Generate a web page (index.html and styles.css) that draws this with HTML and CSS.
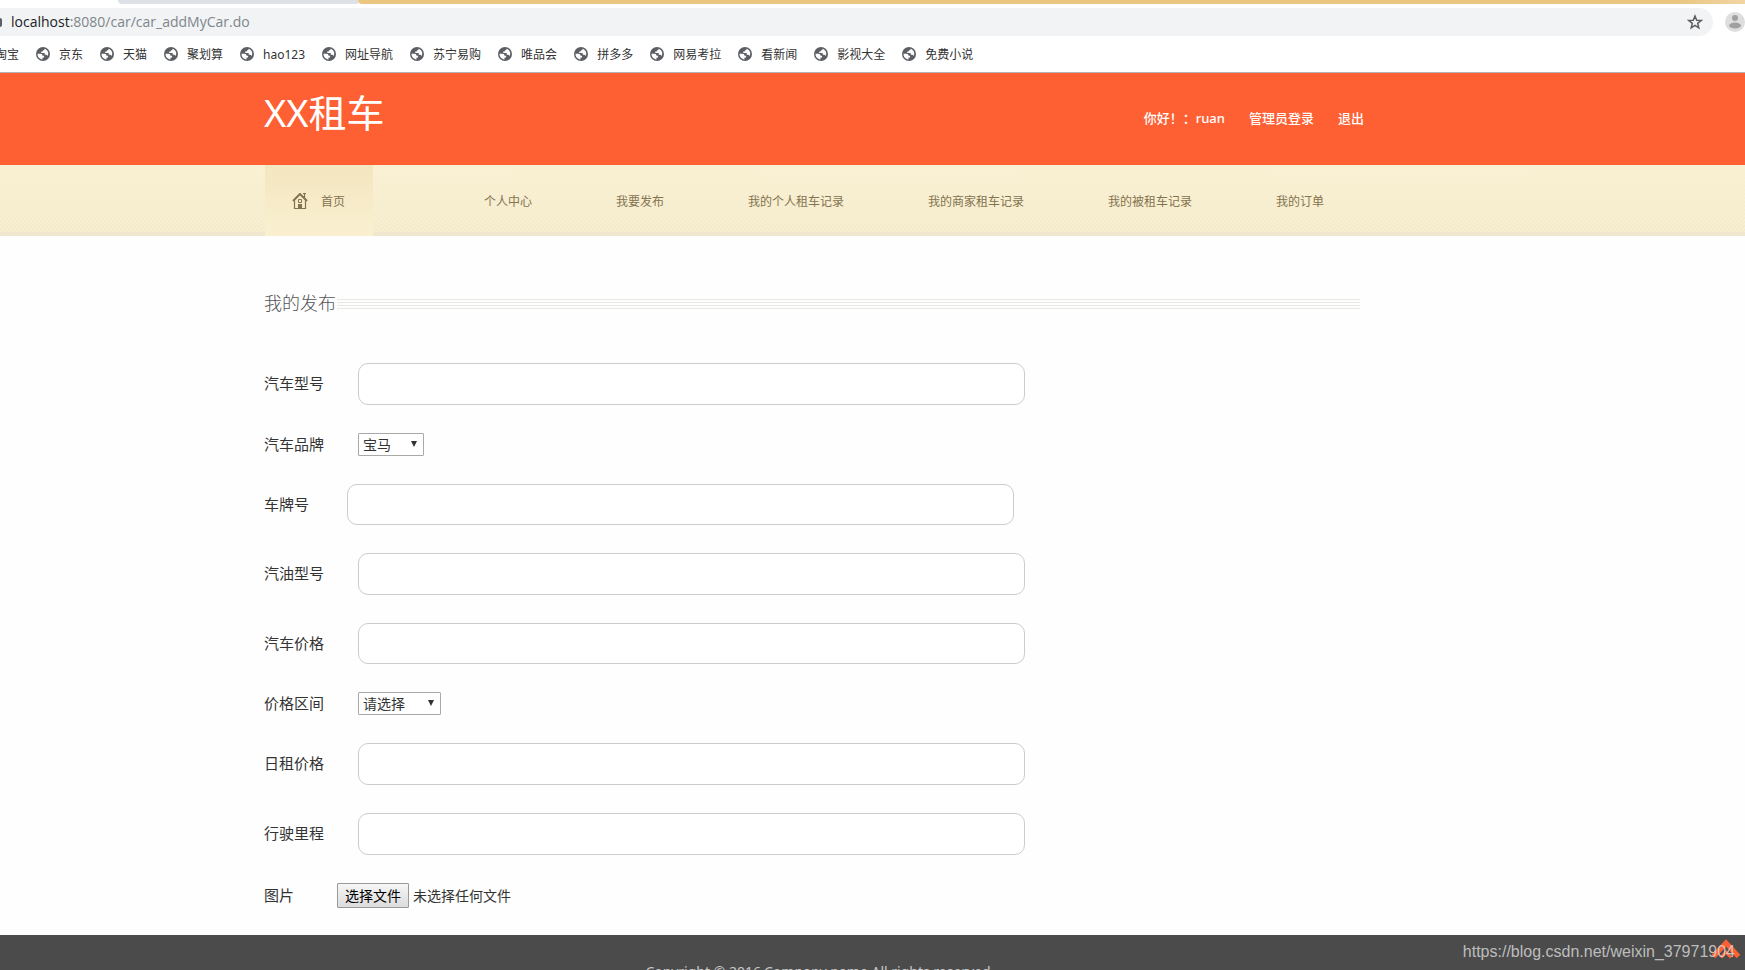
FILE: index.html
```html
<!DOCTYPE html>
<html lang="zh-CN">
<head>
<meta charset="utf-8">
<title>我的发布</title>
<link rel="stylesheet" href="styles.css">
</head>
<body>
<svg class="defs" aria-hidden="true">
  <symbol id="globe" viewBox="0 0 14 14">
    <circle cx="7" cy="7" r="7" fill="#5b5e62"/>
    <path d="M1.500 6.800h2.800c1.600 0 2.200.8 2.200 1.900h1.600v1.800H6.500v1.900C3.500 12.300 1.400 9.800 1.500 6.800z" fill="#fff"/>
    <path d="M8.500 1.700c.2 1.200-.5 1.700-1.700 1.700v1.200H5.200v1.300h3.500v1.900h1.200c.9 0 1.400.6 1.700 1.300 1.600-2.800.3-6.400-3.100-7.400z" fill="#fff"/>
  </symbol>
</svg>
<div class="browser">
  <div class="tabs"><span class="tab"></span><span class="strip"></span></div>
  <div class="toolbar">
    <div class="omnibox">
      <span class="info"></span>
      <span class="url"><b>localhost</b>:8080/car/car_addMyCar.do</span>
      <svg class="star" viewBox="0 0 16 16"><path d="M8 2l1.700 4.200 4.500.3-3.500 2.900 1.100 4.400L8 11.400l-3.800 2.400 1.100-4.400L1.800 6.500l4.500-.3z" fill="none" stroke="#5b5e62" stroke-width="1.500"/></svg>
    </div>
    <svg class="avatar" viewBox="0 0 20 20"><circle cx="10" cy="10" r="10" fill="#dedede"/><circle cx="10" cy="6" r="3" fill="#a0a0a0"/><ellipse cx="10" cy="13.500" rx="6" ry="3" fill="#a0a0a0"/></svg>
  </div>
  <nav class="bookmarks">
    <a href="#"><svg><use href="#globe"/></svg>淘宝</a>
    <a href="#"><svg><use href="#globe"/></svg>京东</a>
    <a href="#"><svg><use href="#globe"/></svg>天猫</a>
    <a href="#"><svg><use href="#globe"/></svg>聚划算</a>
    <a href="#"><svg><use href="#globe"/></svg>hao123</a>
    <a href="#"><svg><use href="#globe"/></svg>网址导航</a>
    <a href="#"><svg><use href="#globe"/></svg>苏宁易购</a>
    <a href="#"><svg><use href="#globe"/></svg>唯品会</a>
    <a href="#"><svg><use href="#globe"/></svg>拼多多</a>
    <a href="#"><svg><use href="#globe"/></svg>网易考拉</a>
    <a href="#"><svg><use href="#globe"/></svg>看新闻</a>
    <a href="#"><svg><use href="#globe"/></svg>影视大全</a>
    <a href="#"><svg><use href="#globe"/></svg>免费小说</a>
  </nav>
</div>
<header class="header">
  <div class="container header-row">
    <h1 class="logo">XX租车</h1>
    <div class="account"><span>你好！：ruan</span><a href="#">管理员登录</a><a href="#">退出</a></div>
  </div>
</header>
<nav class="menu">
  <div class="container menu-row">
    <a class="home" href="#"><svg viewBox="0 0 16 16"><path d="M1 8 8 1l7 7" fill="none" stroke="#83734f" stroke-width="2"/><path d="M12.500 5V0.500M11 .5h3M2.500 7.500v8h11v-8" fill="none" stroke="#83734f" stroke-width="1.200"/><path d="M6 11h4v5H6z" fill="#83734f"/><path d="M6.500 6.500h3v3h-3z" fill="none" stroke="#83734f"/></svg>首页</a>
    <a href="#">个人中心</a>
    <a href="#">我要发布</a>
    <a href="#">我的个人租车记录</a>
    <a href="#">我的商家租车记录</a>
    <a href="#">我的被租车记录</a>
    <a href="#">我的订单</a>
  </div>
</nav>
<main class="container main">
  <h2 class="title">我的发布</h2>
  <form class="form">
    <div class="row"><label for="model">汽车型号</label><input id="model" type="text"></div>
    <div class="row"><label for="brand">汽车品牌</label><select id="brand"><option>宝马</option></select></div>
    <div class="row three"><label for="plate">车牌号</label><input id="plate" class="short" type="text"></div>
    <div class="row"><label for="fuel">汽油型号</label><input id="fuel" type="text"></div>
    <div class="row"><label for="price">汽车价格</label><input id="price" class="short" type="text"></div>
    <div class="row"><label for="range">价格区间</label><select id="range" class="wide"><option>请选择</option></select></div>
    <div class="row"><label for="daily">日租价格</label><input id="daily" type="text"></div>
    <div class="row"><label for="mileage">行驶里程</label><input id="mileage" type="text"></div>
    <div class="row two"><label for="photo">图片</label><input id="photo" type="file" hidden><button type="button">选择文件</button><span class="file-name">未选择任何文件</span></div>
  </form>
</main>
<footer class="footer">
  <p class="container">Copyright © 2016.Company name All rights reserved.</p>
</footer>
<a class="to-top" href="#" aria-label="返回顶部"><svg viewBox="0 0 30 24"><path d="M2.500 18.500 15 5l12.500 13.500" fill="none" stroke="#fe5f33" stroke-width="5"/><path d="M10 19.500 15 14l5 5.500" fill="none" stroke="#fe5f33" stroke-width="3"/></svg></a>
<span class="watermark">https://blog.csdn.net/weixin_37971904</span>
</body>
</html>
```
FILE: styles.css
```css
* { box-sizing: border-box; }
body {
  margin: 0;
  height: 100vh;
  overflow: hidden;
  position: relative;
  display: flex;
  flex-direction: column;
  background: #fefefe;
  color: #333;
  font-family: "Noto Sans", "Noto Sans CJK SC", sans-serif;
}
a { color: inherit; text-decoration: none; }
.defs { display: none; }
.browser { background: #fff; border-bottom: 1px solid #b4b4b8; }
.tabs { display: flex; height: 4px; padding-left: 118px; }
.tab { width: 240px; background: #dee1e6; border-bottom-left-radius: 4px; }
.strip { flex: 1; background: linear-gradient(90deg, #ebc680 95%, #f1d5a4); border-bottom-left-radius: 4px; }
.toolbar { display: flex; align-items: center; gap: 12px; height: 36px; }
.omnibox {
  flex: 1;
  display: flex;
  align-items: center;
  height: 28px;
  padding-right: 10px;
  background: #f1f3f4;
  border-radius: 0 14px 14px 0;
}
.info { width: 2px; height: 9px; margin-right: 9px; background: #5b5e62; border-radius: 0 2px 2px 0; }
.url { flex: 1; font-size: 14px; line-height: 20px; color: #80868b; font-family: "Open Sans", sans-serif; }
.url b { font-weight: 400; color: #202124; }
.star { width: 16px; height: 16px; }
.avatar { width: 20px; height: 20px; }
.bookmarks {
  display: flex;
  gap: 17px;
  height: 32px;
  padding-bottom: 4px;
  margin-left: -28px;
  align-items: center;
  font-size: 12px;
  white-space: nowrap;
}
.bookmarks a { display: flex; align-items: center; gap: 9px; }
.bookmarks svg { width: 14px; height: 14px; }
.container { width: 100%; max-width: 1364px; padding-left: 264px; }
.header { background: #fe5f33; color: #fff; }
.header-row { display: flex; justify-content: space-between; align-items: center; height: 92px; }
.logo { margin: 0 0 14px; font-size: 38px; line-height: 48px; font-weight: 400; }
.account { display: flex; gap: 24px; margin-bottom: 2px; font-size: 13px; line-height: 20px; font-weight: 500; }
.menu {
  background:
    linear-gradient(#faf0d3, rgba(250, 240, 211, 0)),
    linear-gradient(135deg, #f2e8ca 25%, transparent 25% 50%, #f2e8ca 50% 75%, transparent 75%) 0 0 / 4px 4px,
    #f9f0d2;
  box-shadow: inset 0 -4px #f1e7cf;
  color: #83734f;
  font-size: 12px;
}
.menu-row { display: flex; height: 71px; }
.menu-row a { display: flex; flex: none; align-items: center; padding: 0 42px; white-space: nowrap; }
.menu-row .home {
  width: 108px;
  margin: 0 69px 0 1px;
  padding: 0 0 0 27px;
  gap: 13px;
  background: linear-gradient(#f3e6c0, #faf0d0);
}
.home svg { width: 16px; height: 16px; }
.main { padding-top: 53px; }
.title {
  display: flex;
  align-items: center;
  margin: 0 4px 46px 0;
  font-size: 18px;
  line-height: 28px;
  font-weight: 300;
  color: #555;
}
.title::after {
  content: "";
  flex: 1;
  height: 10px;
  margin: 2px 0 0 1px;
  background: repeating-linear-gradient(#e8e8e4 0 1px, transparent 1px 3px);
}
.form { display: flex; flex-direction: column; gap: 28px; }
.row { display: flex; align-items: center; }
.row label { width: 94px; padding-bottom: 2px; font-size: 15px; line-height: 20px; }
.three label { width: 83px; }
.two label { width: 73px; }
.row input { flex: 0 1 667px; height: 42px; padding: 0 12px; border: 1px solid #ccc; border-radius: 10px; background: #fff; font: inherit; }
.row .short { height: 41px; }
.row select {
  appearance: none;
  width: 66px;
  height: 23px;
  padding: 0 4px;
  border: 1px solid #a9a9a9;
  border-radius: 1px;
  background: #fff url("data:image/svg+xml,%3Csvg xmlns='http://www.w3.org/2000/svg' width='6' height='6'%3E%3Cpath d='M0 0h6L3 6z' fill='%23333'/%3E%3C/svg%3E") no-repeat right 6px top 7px;
  color: #333;
  font-family: inherit;
  font-size: 14px;
  line-height: 20px;
}
.row .wide { width: 83px; }
.row button {
  width: 72px;
  height: 25px;
  padding: 0;
  border: 1px solid #999;
  border-radius: 1px;
  background: linear-gradient(#f6f6f6, #dcdcdc);
  color: #000;
  font-family: inherit;
  font-size: 14px;
  line-height: 20px;
}
.file-name { margin-left: 4px; font-size: 14px; line-height: 20px; }
.footer { flex: 1 0 auto; height: 36px; margin-top: 27px; background: #4b4b4b; overflow: hidden; }
.footer p { margin: 0; padding-top: 27px; padding-left: 276px; text-align: center; font-size: 14px; line-height: 20px; color: #c8c8c8; }
.to-top { position: absolute; right: 4px; bottom: 8px; width: 30px; height: 24px; }
.to-top svg { display: block; width: 30px; height: 24px; }
.watermark {
  position: absolute;
  right: 10px;
  bottom: 8px;
  font-family: "Liberation Sans", sans-serif;
  font-size: 16px;
  line-height: 20px;
  color: rgba(220, 220, 220, 0.8);
}
```
